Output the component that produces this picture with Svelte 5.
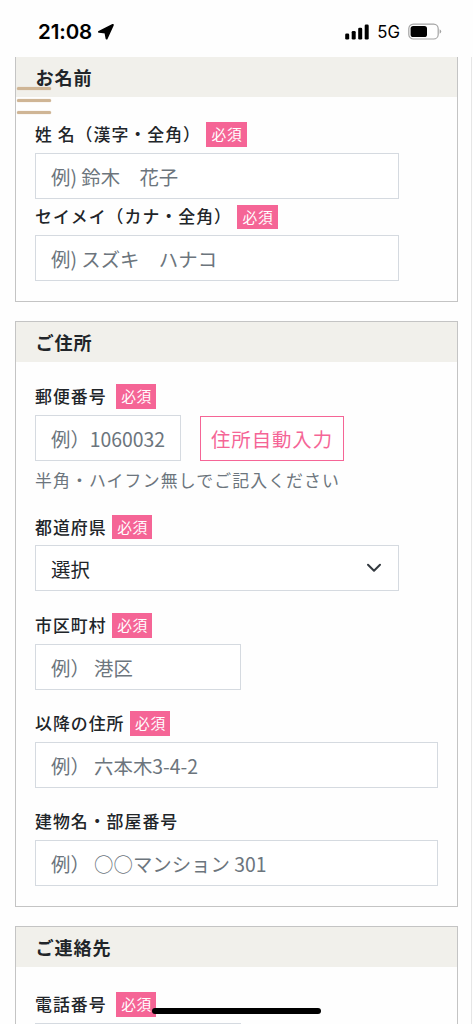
<script>
    let lastName = "";
    let kana = "";
    let zip = "";
    let pref = "";
    let city = "";
    let street = "";
    let building = "";
    let tel = "";
</script>

<div class="screen">
    <header class="status">
        <div class="time">
            <span>21:08</span>
            <svg width="18" height="18" viewBox="0 0 18 18">
                <path d="M15.8 2 L2 8.8 L8.4 9.4 L9.6 15.6 Z" stroke="#000" stroke-width="2" stroke-linejoin="round" />
            </svg>
        </div>
        <div class="signal">
            <svg width="25" height="16" viewBox="0 0 25 16">
                <rect x="0.2" y="9.5" width="4" height="6" rx="1.3" />
                <rect x="6.7" y="6.9" width="4" height="8.6" rx="1.3" />
                <rect x="13.2" y="3.7" width="4" height="11.8" rx="1.3" />
                <rect x="19.7" y="0.4" width="4" height="15.1" rx="1.3" />
            </svg>
            <span>5G</span>
            <svg class="battery" width="34" height="17" viewBox="0 0 34 17">
                <rect x="0.8" y="1.1" width="29.4" height="14.9" rx="4.6" fill="none" stroke="#a3a3a3" stroke-width="1.2" />
                <rect x="2.6" y="2.9" width="16.4" height="11.2" rx="2.6" />
                <path d="M31.6 6.3 Q33.2 7 33.2 8.5 Q33.2 10 31.6 10.7 Z" fill="#a3a3a3" />
            </svg>
        </div>
    </header>

    <main>
        <button class="menu" aria-label="menu">
            <i></i>
            <i></i>
            <i></i>
        </button>

        <section class="first">
            <h2>お名前</h2>
            <div class="body tight">
                <div class="field">
                    <label for="name">姓 名（漢字・全角）<em>必須</em></label>
                    <input type="text" id="name" class="mid" placeholder="例) 鈴木　花子" bind:value={lastName}>
                </div>
                <div class="field">
                    <label for="kana">セイメイ（カナ・全角）<em>必須</em></label>
                    <input type="text" id="kana" class="mid" placeholder="例) スズキ　ハナコ" bind:value={kana}>
                </div>
            </div>
        </section>

        <section>
            <h2>ご住所</h2>
            <div class="body">
                <div class="field zip">
                    <label for="zip">郵便番号<em class="wide">必須</em></label>
                    <div class="row">
                        <input type="text" id="zip" class="short" placeholder="例）1060032" bind:value={zip}>
                        <button class="auto">住所自動入力</button>
                    </div>
                    <p>半角・ハイフン無しでご記入ください</p>
                </div>
                <div class="field">
                    <label for="pref">都道府県<em>必須</em></label>
                    <div class="select mid">
                        <select id="pref" bind:value={pref}>
                            <option value="">選択</option>
                        </select>
                        <svg width="16" height="10" viewBox="0 0 16 10">
                            <path d="M2 1.8 L8 7.8 L14 1.8" fill="none" stroke="#343a40" stroke-width="2" stroke-linecap="round" stroke-linejoin="round" />
                        </svg>
                    </div>
                </div>
                <div class="field">
                    <label for="city">市区町村<em>必須</em></label>
                    <input type="text" id="city" class="half" placeholder="例） 港区" bind:value={city}>
                </div>
                <div class="field">
                    <label for="street">以降の住所<em>必須</em></label>
                    <input type="text" id="street" placeholder="例） 六本木3-4-2" bind:value={street}>
                </div>
                <div class="field">
                    <label for="building">建物名・部屋番号</label>
                    <input type="text" id="building" placeholder="例） ○○マンション 301" bind:value={building}>
                </div>
            </div>
        </section>

        <section>
            <h2>ご連絡先</h2>
            <div class="body contact">
                <div class="field">
                    <label for="tel">電話番号<em class="wide">必須</em></label>
                    <input type="text" id="tel" class="half" bind:value={tel}>
                </div>
            </div>
        </section>
    </main>
    <div class="home"></div>
</div>

<style>
    :global(body) {
        margin: 0;
        background: #fefefe;
    }
    .screen {
        position: relative;
        height: 1024px;
        overflow: hidden;
        display: flex;
        flex-direction: column;
        font-family: "Noto Sans CJK JP", sans-serif;
        color: #212529;
    }
    .screen * {
        box-sizing: border-box;
    }
    .status {
        flex: none;
        height: 57px;
        padding: 6px 31px 0 38px;
        display: flex;
        align-items: center;
        justify-content: space-between;
        font-family: Inter, sans-serif;
        color: #000;
    }
    .time {
        display: flex;
        align-items: center;
        gap: 5px;
        font-size: 20.5px;
        font-weight: 600;
        letter-spacing: -0.1px;
    }
    .signal {
        display: flex;
        align-items: center;
        font-size: 16.8px;
        font-weight: 400;
    }
    .signal span {
        margin: 0 8px 0 7px;
    }
    main {
        position: relative;
        flex: 1;
        min-height: 0;
        overflow: hidden;
        margin-right: 1px;
        padding: 0 13px 0 15px;
        border-right: 1px solid #e6e6e6;
    }
    .menu {
        position: absolute;
        top: 30px;
        left: 17px;
        width: 34px;
        padding: 0;
        border: 0;
        background: none;
        display: grid;
        gap: 9px;
    }
    .menu i {
        height: 3px;
        border-radius: 2px;
        background: #cfb595;
        box-shadow: 0 0 1px #cfb595;
    }
    section {
        margin-bottom: 19.5px;
        border: 1px solid #c4c4c4;
    }
    section.first {
        border-top: 0;
    }
    h2 {
        height: 40px;
        margin: 0;
        padding-left: 19.5px;
        background: #f1f0eb;
        font-size: 18.1px;
        font-weight: 700;
        line-height: 41px;
        letter-spacing: 0.05em;
    }
    .body {
        padding: 22px 19px 19.5px;
        display: flex;
        flex-direction: column;
        gap: 21.75px;
    }
    .body.tight {
        padding-top: 25px;
        gap: 6px;
    }
    .body.contact {
        padding-top: 25px;
    }
    .field label {
        height: 24.5px;
        margin-bottom: 6px;
        display: flex;
        align-items: center;
        font-size: 16.9px;
        font-weight: 500;
        line-height: 22px;
        padding-bottom: 1px;
        letter-spacing: 0.06em;
        white-space: pre;
    }
    em {
        height: 24.5px;
        margin: 0 0 -1px 5.5px;
        padding: 0 4.5px 0 5px;
        background: #f56596;
        color: #fff;
        font-size: 14.7px;
        font-style: normal;
        font-weight: 400;
        line-height: 24px;
        letter-spacing: 0.05em;
    }
    em.wide {
        margin-left: 9.5px;
    }
    input,
    select {
        display: block;
        width: 100%;
        height: 46px;
        padding: 1px 15px 0;
        border: 1px solid #d5dae0;
        border-radius: 0;
        outline: 0;
        background: #fff;
        color: #212529;
        font-family: inherit;
        font-size: 19.4px;
    }
    input::placeholder {
        color: #6c757d;
        opacity: 1;
    }
    select {
        appearance: none;
    }
    .mid {
        width: 364px;
    }
    .short {
        width: 146px;
    }
    .half {
        width: 206px;
    }
    .row {
        display: flex;
        align-items: flex-end;
        gap: 19px;
    }
    .auto {
        width: 144px;
        height: 45px;
        padding: 0;
        border: 1px solid #f56596;
        background: #fff;
        color: #f56596;
        font-family: inherit;
        font-size: 19.4px;
        letter-spacing: 0.05em;
    }
    .zip p {
        height: 32.7px;
        margin: 0;
        padding-top: 6px;
        color: #6c757d;
        font-size: 16.9px;
        line-height: 25px;
        letter-spacing: 0.064em;
    }
    .select {
        display: grid;
        align-items: center;
    }
    .select > * {
        grid-area: 1 / 1;
    }
    .select svg {
        justify-self: end;
        margin-right: 17px;
        pointer-events: none;
    }
    .home {
        position: absolute;
        left: 152px;
        bottom: 10px;
        width: 169px;
        height: 6px;
        border-radius: 3px;
        background: #000;
    }
</style>
